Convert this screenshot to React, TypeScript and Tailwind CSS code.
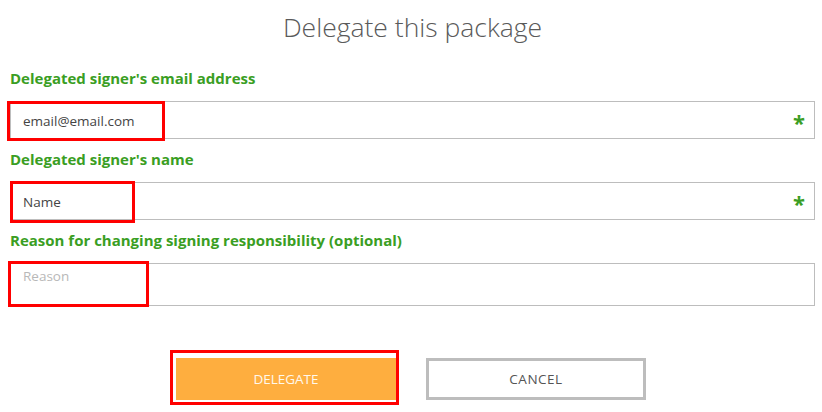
import type { ReactNode } from 'react';

function Field({
  label,
  height,
  children,
  required,
  mark,
  className = '',
}: {
  label: string;
  height: string;
  children: ReactNode;
  required?: boolean;
  mark: string;
  className?: string;
}) {
  return (
    <div className={className}>
      <div className="text-[15px] leading-[20px] font-bold text-[#3a9e23]">{label}</div>
      <div className={`relative mt-[13px] flex border border-[#bdbdbd] bg-white ${height}`}>
        {children}
        {required && (
          <span className="ml-auto mr-[9px] self-center pt-[3px] text-[22px] leading-none font-bold text-[#3a9e23]">
            *
          </span>
        )}
        <div className={`pointer-events-none absolute border-[3px] border-[#ff0000] ${mark}`} />
      </div>
    </div>
  );
}

export default function App() {
  return (
    <div className="h-[412px] w-[822px] overflow-hidden bg-white pl-[10px] pr-[7px] font-['Open_Sans',sans-serif]">
      <h1 className="pt-[7px] text-center text-[26.5px] leading-[40px] font-light text-[#5a5a5a]">
        Delegate this package
      </h1>

      <Field
        className="mt-[21px]"
        label="Delegated signer's email address"
        height="h-[38px]"
        required
        mark="-left-[4px] -top-[1px] h-[40px] w-[158px]"
      >
        <span className="self-center pl-[12px] pt-[3px] text-[13.5px] text-[#444]">email@email.com</span>
      </Field>

      <Field
        className="mt-[10px]"
        label="Delegated signer's name"
        height="h-[38px]"
        required
        mark="-left-[1px] -top-[2px] h-[42px] w-[125px]"
      >
        <span className="self-center pl-[12px] pt-[3px] text-[13.5px] text-[#444]">Name</span>
      </Field>

      <Field
        className="mt-[10px]"
        label="Reason for changing signing responsibility (optional)"
        height="h-[43px]"
        mark="-left-[3px] -top-[3px] h-[46px] w-[141px]"
      >
        <span className="pl-[12px] pt-[3px] text-[13.5px] leading-[19px] text-[#b8b8b8]">Reason</span>
      </Field>

      <div className="mt-[52px] flex justify-center gap-[30px] pr-[3px]">
        <div className="relative">
          <button className="flex h-[42px] w-[220px] items-center justify-center bg-[#feae3f] text-[13.5px] text-[#fff8ec]">
            DELEGATE
          </button>
          <div className="pointer-events-none absolute -left-[6px] -top-[8px] h-[55px] w-[229px] border-[3px] border-[#ff0000]" />
        </div>
        <button className="flex h-[42px] w-[220px] items-center justify-center border-[3px] border-[#bdbdbd] bg-white text-[13.5px] tracking-[0.5px] text-[#555]">
          CANCEL
        </button>
      </div>
    </div>
  );
}
